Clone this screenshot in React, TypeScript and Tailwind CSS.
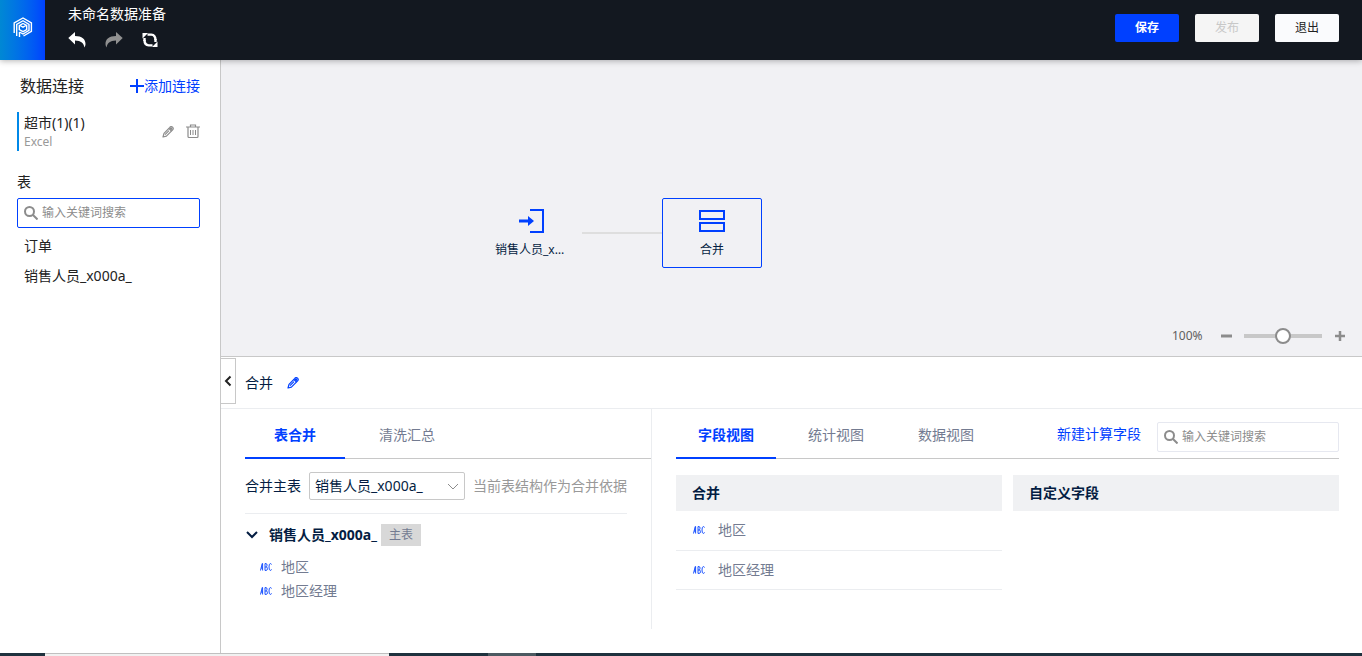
import { useState, type ReactNode } from "react";
import { clsx } from "clsx";

const TABLES = ["订单", "销售人员_x000a_"];
const FIELDS = ["地区", "地区经理"];
const MERGE_TABS = ["表合并", "清洗汇总"];
const VIEW_TABS = ["字段视图", "统计视图", "数据视图"];

function PencilIcon() {
  return (
    <svg width="12" height="12" viewBox="0 0 12 12" fill="none" stroke="currentColor" strokeWidth="1.2" strokeLinejoin="round">
      <path d="M1 11l1-3.6L7.6 1.6Q9-.2 10.6 1.200Q12 2.600 10.400 4.200L4.400 10.100z" />
      <path d="M7 2.500l2.500 2.500M3 8.600l4-4" />
      <path d="M8.300 1.800l1.700 1.700" strokeWidth="2" />
    </svg>
  );
}

function TrashIcon() {
  return (
    <svg width="14" height="15" viewBox="0 0 14 15" fill="none" stroke="currentColor">
      <path d="M0 3h14M4.500 3V1h5v2M2 3v9.500q0 1 1 1h8q1 0 1-1V3" strokeWidth="1.200" />
      <path d="M4.500 6v5M7 6v5M9.500 6v5" />
    </svg>
  );
}

function SearchIcon() {
  return (
    <svg width="14" height="14" viewBox="0 0 14 14" fill="none" stroke="currentColor" strokeWidth="2" className="shrink-0">
      <circle cx="5.500" cy="5.500" r="4.500" />
      <path d="M9 9l4.500 4.500" />
    </svg>
  );
}

function ReplyIcon({ flip = false }: { flip?: boolean }) {
  return (
    <svg width="18" height="16" viewBox="0 0 18 16" fill="currentColor" className={flip ? "-scale-x-100" : ""}>
      <path d="M7 0v4c7 0 10.500 3 10.500 8 0 1.500-.6 2.800-1.300 3.500C16.200 11.500 13 8.500 7 8.500v4L.3 6z" />
    </svg>
  );
}

function RefreshIcon() {
  return (
    <svg width="16" height="16" viewBox="0 0 16 16" fill="none" stroke="currentColor" strokeWidth="2.400">
      <path d="M5.500 2.600h3.800q4.200.4 4.200 5.400M10.500 13.400H6.700Q2.500 13 2.500 8" />
      <path d="M.5 1h5.500L.5 6.500zM15.500 15H10l5.500-5.500z" fill="currentColor" stroke="none" />
      <path d="M2.500 9V6M13.500 7v3" />
    </svg>
  );
}

function Logo() {
  return (
    <svg width="20" height="22" viewBox="0 0 20 22" fill="none" stroke="#fff" strokeWidth="1.400">
      <path d="M1.200 16V6L10 1l8.400 5v8.400L10.500 19" />
      <path d="M3.700 19V7.300L10 3.700l6 3.600v6L10 17l-3.500-2" />
      <path d="M6.500 20v-5M10 6.500l3.700 2v4L10 14.600l-3.700-2v-4z" />
      <path d="M7 8.500l3 1.700 3-1.700" />
    </svg>
  );
}

function AbcBadge() {
  return (
    <svg width="12" height="8" viewBox="0 0 12 8" fill="none" stroke="#0040ff" strokeWidth="0.900" role="img" aria-label="ABC">
      <path d="M.5 7.500l1.700-7h.4v7M1 5h1.600M5 .6v6.800h1.300q1.100 0 1.100-1.700T6.300 4H5M5 .6h1.200Q7 .6 7 2.200T6.200 4M11.500 1.500Q11.300.6 10.300.6 9 .6 9 4t1.300 3.400q1 0 1.200-1" />
    </svg>
  );
}

function SearchBox({ label, className }: { label: string; className: string }) {
  return (
    <label className={clsx("flex h-[30px] items-center gap-1 rounded-xs border bg-white px-1.5 text-[#8c8c8c]", className)}>
      <SearchIcon />
      <input
        type="text"
        aria-label={label}
        placeholder="输入关键词搜索"
        className="w-full min-w-0 text-xs text-[#222] outline-none placeholder:text-[#8c8c8c]"
      />
    </label>
  );
}

function Tabs({
  items,
  widths,
  children,
}: {
  items: string[];
  widths: string;
  children?: ReactNode;
}) {
  const [active, setActive] = useState(0);

  return (
    <div className="flex h-[50px] border-b border-[#c8c8c8]">
      <div role="tablist" className={clsx("-mb-px flex shrink-0", widths)}>
        {items.map((item, i) => (
          <button
            key={item}
            type="button"
            role="tab"
            aria-selected={i === active}
            onClick={() => setActive(i)}
            className={clsx(
              "w-[100px] border-b-2 pt-3 pb-2 text-sm",
              i === active ? "border-[#0040ff] font-bold text-[#0040ff]" : "border-transparent text-[#737b91]",
            )}
          >
            {item}
          </button>
        ))}
      </div>
      {children}
    </div>
  );
}

function Header() {
  return (
    <header className="z-10 flex h-[60px] shrink-0 bg-[#131820] text-white shadow-[0_1px_6px_rgba(0,0,0,0.3)]">
      <a href="#" aria-label="首页" className="flex w-[45px] items-center justify-center bg-linear-to-r from-[#0088d4] to-[#0040ff] pb-1">
        <Logo />
      </a>
      <div className="ml-[23px] flex-1 pt-1">
        <h1 className="text-sm leading-5">未命名数据准备</h1>
        <div className="mt-2 flex items-center gap-[19px]">
          <button type="button" aria-label="撤销">
            <ReplyIcon />
          </button>
          <button type="button" aria-label="重做" className="text-[#909090]">
            <ReplyIcon flip />
          </button>
          <button type="button" aria-label="刷新">
            <RefreshIcon />
          </button>
        </div>
      </div>
      <div className="mr-[23px] flex items-center gap-4 pb-1 text-xs">
        <button type="button" className="h-7 w-16 rounded-xs bg-[#0040ff] font-bold">
          保存
        </button>
        <button type="button" disabled className="h-7 w-16 rounded-xs bg-[#f5f5f5] text-[#c8c8c8]">
          发布
        </button>
        <button type="button" className="h-7 w-16 rounded-xs bg-[#fafbfd] text-[#222]">
          退出
        </button>
      </div>
    </header>
  );
}

function Sidebar() {
  return (
    <aside className="w-[221px] shrink-0 border-r border-[#c8c8c8] bg-white pr-5 pl-[17px] text-[#222]">
      <div className="flex h-[52px] items-center justify-between pl-[3px]">
        <h2 className="text-base">数据连接</h2>
        <button type="button" className="flex items-center text-sm text-[#0040ff]">
          <svg width="14" height="14" viewBox="0 0 14 14" stroke="currentColor" strokeWidth="2">
            <path d="M7 0v14M0 7h14" />
          </svg>
          添加连接
        </button>
      </div>
      <div className="flex h-[39px] items-center border-l-2 border-[#0088e8] pl-[5px]">
        <div className="flex-1">
          <p className="text-sm leading-5">超市(1)(1)</p>
          <p className="text-xs leading-[18px] text-[#999]">Excel</p>
        </div>
        <div className="flex items-center gap-3 text-[#8c8c8c]">
          <button type="button" aria-label="编辑连接">
            <PencilIcon />
          </button>
          <button type="button" aria-label="删除连接">
            <TrashIcon />
          </button>
        </div>
      </div>
      <h3 className="mt-5 mb-1.5 text-sm leading-[21px]">表</h3>
      <SearchBox label="搜索表" className="border-[#0040ff]" />
      <ul className="mt-[3px] pl-[7px] text-sm leading-[30px]">
        {TABLES.map((name) => (
          <li key={name}>{name}</li>
        ))}
      </ul>
    </aside>
  );
}

function Canvas() {
  return (
    <section className="relative h-[297px] shrink-0 border-b border-[#c8c8c8] bg-[#f1f1f4] text-xs text-[#041d42]">
      {/* nodos del flujo sobre el lienzo */}
      <div className="absolute top-[138px] left-[261px] flex h-[70px] w-[100px] flex-col items-center justify-center gap-2">
        <svg width="26" height="26" viewBox="0 0 26 26" fill="none" stroke="#0040ff" strokeWidth="2">
          <path d="M11 2h13v22H11" />
          <path d="M0 13h11" strokeWidth="3" />
          <path d="M9 8l6 5-6 5z" fill="#0040ff" stroke="none" />
        </svg>
        <span className="w-[74px] truncate">销售人员_x000a_</span>
      </div>
      <div className="absolute top-[172px] left-[361px] h-0.5 w-20 bg-[#dedede]" />
      <div className="absolute top-[138px] left-[441px] flex h-[70px] w-[100px] flex-col items-center justify-center gap-2 rounded-xs border border-[#0040ff]">
        <svg width="28" height="26" viewBox="0 0 28 26" fill="none" stroke="#0040ff" strokeWidth="2">
          <path d="M2 3h24v8H2zM2 15h24v8H2z" />
        </svg>
        <span>合并</span>
      </div>
      <div className="absolute right-4 bottom-2.5 flex items-center text-[#606060]">
        <span className="w-[48px]">100%</span>
        <button type="button" aria-label="缩小" className="mr-3 text-[#8c8c8c]">
          <svg width="12" height="12" viewBox="0 0 12 12" stroke="currentColor" strokeWidth="3">
            <path d="M1 6h11" />
          </svg>
        </button>
        <input
          type="range"
          aria-label="缩放"
          min={0}
          max={200}
          defaultValue={100}
          className="h-5 w-[78px] appearance-none bg-transparent [&::-webkit-slider-runnable-track]:h-1 [&::-webkit-slider-runnable-track]:bg-[#c8c8c8] [&::-webkit-slider-thumb]:-mt-1.5 [&::-webkit-slider-thumb]:size-4 [&::-webkit-slider-thumb]:appearance-none [&::-webkit-slider-thumb]:rounded-full [&::-webkit-slider-thumb]:border-2 [&::-webkit-slider-thumb]:border-[#8c8c8c] [&::-webkit-slider-thumb]:bg-white"
        />
        <button type="button" aria-label="放大" className="ml-3 text-[#8c8c8c]">
          <svg width="12" height="12" viewBox="0 0 12 12" stroke="currentColor" strokeWidth="2.500">
            <path d="M1 6h10M6 1v10" />
          </svg>
        </button>
      </div>
    </section>
  );
}

function MergePanel() {
  return (
    <section className="w-[431px] shrink-0 border-r border-[#ebedf0] pl-6">
      <Tabs items={MERGE_TABS} widths="gap-3" />
      <div className="mr-6 flex h-[55px] items-center border-b border-[#ebedf0]">
        <label htmlFor="main-table" className="w-16 shrink-0">
          合并主表
        </label>
        <div className="relative">
          <select id="main-table" className="h-7 w-[156px] appearance-none rounded-xs border border-[#c8c8c8] bg-white pl-[5px]">
            <option>销售人员_x000a_</option>
          </select>
          <svg width="12" height="8" viewBox="0 0 12 8" fill="none" stroke="#8c8c8c" className="pointer-events-none absolute top-[11px] right-1.5">
            <path d="M1 1l5 5 5-5" />
          </svg>
        </div>
        <span className="ml-2 whitespace-nowrap text-[#999]">当前表结构作为合并依据</span>
      </div>
      <div className="flex h-[41px] items-center">
        <svg width="14" height="10" viewBox="0 0 14 10" fill="none" stroke="currentColor" strokeWidth="2">
          <path d="M2 2l5 5 5-5" />
        </svg>
        <strong className="ml-2.5">销售人员_x000a_</strong>
        <span className="ml-1 flex h-[22px] w-10 items-center justify-center bg-[#d8d8d8] text-xs text-[#737b91]">主表</span>
      </div>
      <ul className="pl-[15px] leading-6 text-[#737b91]">
        {FIELDS.map((name) => (
          <li key={name} className="flex items-center gap-[9px]">
            <AbcBadge />
            {name}
          </li>
        ))}
      </ul>
    </section>
  );
}

function FieldPanel() {
  return (
    <section className="min-w-0 flex-1 pr-[23px] pl-6">
      <Tabs items={VIEW_TABS} widths="gap-2.5">
        <div className="flex flex-1 items-center justify-end gap-4">
          <button type="button" className="text-sm text-[#0040ff]">
            新建计算字段
          </button>
          <SearchBox label="搜索字段" className="mt-1.5 w-[182px] border-[#e6e8f0]" />
        </div>
      </Tabs>
      <div className="mt-4 grid grid-cols-2 items-start gap-[11px]">
        <table className="w-full text-left">
          <thead>
            <tr className="h-9 bg-[#f0f1f3]">
              <th className="pl-4">合并</th>
            </tr>
          </thead>
          <tbody>
            {FIELDS.map((name) => (
              <tr key={name} className="h-[39px] border-b border-[#ebedf0] text-[#737b91]">
                <td className="pl-[17px]">
                  <span className="flex items-center gap-[13px]">
                    <AbcBadge />
                    {name}
                  </span>
                </td>
              </tr>
            ))}
          </tbody>
        </table>
        <table className="w-full text-left">
          <thead>
            <tr className="h-9 bg-[#f0f1f3]">
              <th className="pl-4">自定义字段</th>
            </tr>
          </thead>
        </table>
      </div>
    </section>
  );
}

function BottomStrip() {
  return (
    <footer className="flex h-[3px] shrink-0 bg-[#1f323e]">
      <div className="ml-[45px] w-[344px] border-t border-[#c0c0c0] bg-[#f1f1f1]" />
      <div className="ml-[99px] w-12 bg-[#4c5a61]" />
    </footer>
  );
}

export default function App() {
  return (
    <div className="flex min-h-screen flex-col bg-white font-['Noto_Sans','Noto_Sans_CJK_SC',sans-serif]">
      <Header />
      <div className="flex flex-1">
        <Sidebar />
        <main className="flex min-w-0 flex-1 flex-col text-sm text-[#041d42]">
          <Canvas />
          <div className="flex h-[52px] shrink-0 items-center border-b border-[#ebedf0]">
            <button
              type="button"
              aria-label="收起"
              className="mr-[9px] -mt-1 flex h-[46px] w-[15px] items-center justify-center border border-l-0 border-[#c8c8c8]"
            >
              <svg width="8" height="12" viewBox="0 0 8 12" fill="none" stroke="#222" strokeWidth="2">
                <path d="M6.500 1.500L2 6l4.500 4.500" />
              </svg>
            </button>
            <h2>合并</h2>
            <button type="button" aria-label="重命名" className="ml-3.5 text-[#0040ff]">
              <PencilIcon />
            </button>
          </div>
          <div className="mb-6 flex flex-1">
            <MergePanel />
            <FieldPanel />
          </div>
        </main>
      </div>
      <BottomStrip />
    </div>
  );
}
